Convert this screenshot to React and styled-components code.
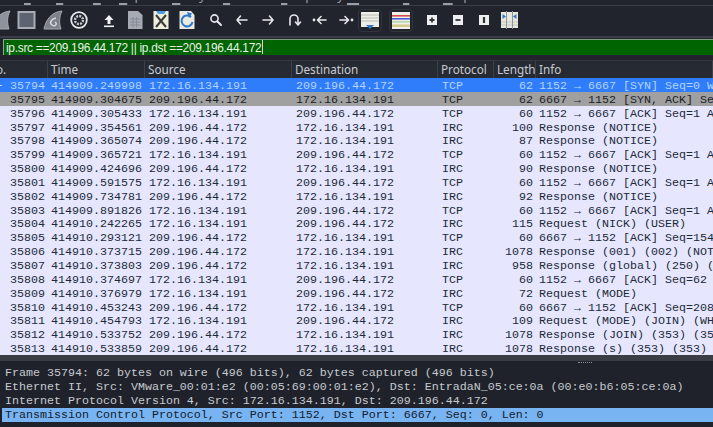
import React from 'react'
import styled, { createGlobalStyle } from 'styled-components'

const GlobalStyle = createGlobalStyle`
  html, body { margin: 0; padding: 0; background: #21242c; overflow: hidden; }
`

const mono = `"Liberation Mono", monospace`
const sans = `"Noto Sans", "Liberation Sans", sans-serif`

const Window = styled.div`
  width: 713px;
  height: 427px;
  display: flex;
  flex-direction: column;
  overflow: hidden;
  background: #21242c;
`

const MenuStrip = styled.div`
  height: 5px;
  flex: none;
  padding-left: 24px;
  display: flex;
  overflow: hidden;
  border-bottom: 1px solid #3a3e46;
`

const MenuItem = styled.span`
  flex: none;
  width: ${p => p.w}px;
  height: 19px;
  margin-top: -13px;
  font: 13px/16px ${sans};
  color: #9a9ea6;
  u { text-underline-offset: 3px; text-decoration-thickness: 2px; }
`

const Toolbar = styled.div`
  height: 28px;
  padding-bottom: 2px;
  flex: none;
  display: flex;
  align-items: center;
  margin-left: -12px;
`

const ToolGroup = styled.div`
  display: flex;
  align-items: center;
  margin-left: ${p => p.gap || 0}px;
`

const ToolButton = styled.div`
  width: ${p => (p.boxed ? 24 : 26)}px;
  height: ${p => (p.boxed ? 23 : 26)}px;
  flex: none;
  display: flex;
  align-items: center;
  justify-content: center;
  box-sizing: border-box;
  border: 1px solid ${p => (p.boxed ? '#30343d' : 'transparent')};
  border-radius: 4px;
`

const FilterBar = styled.div`
  flex: none;
  border-top: 2px solid #3a3e46;
  padding: 2px 0 5px 3px;
`

const FilterInput = styled.div`
  height: 15px;
  background: #006400;
  box-shadow: 0 -1px 0 #7f9f7f;
  border-left: 1px solid #8fae8f;
  padding-left: 2px;
  font: 11.9px/15px "Liberation Sans", sans-serif;
  letter-spacing: -0.28px;
  color: #e8f2e8;
  white-space: nowrap;
`

const Caret = styled.span`
  display: inline-block;
  width: 1px;
  height: 14px;
  margin-left: 1px;
  vertical-align: -2px;
  background: #e8c8e8;
`

const columns = '48px 97px 147px 146px 56px 42px 1fr'

const HeaderRow = styled.div`
  height: 18px;
  flex: none;
  display: grid;
  grid-template-columns: ${columns};
  background: #262a33;
  border-top: 1px solid #33373f;
  box-sizing: border-box;
`

const HeaderCell = styled.div`
  font: 11.7px/17px ${sans};
  color: #c6cad0;
  padding-left: 3px;
  border-right: 1px solid #3c4049;
  white-space: nowrap;
  overflow: hidden;
  text-indent: ${p => p.indent || 0}px;
`

const PacketList = styled.div`
  position: relative;
  height: 277px;
  flex: none;
  overflow: hidden;
  background: #e6e6ff;
`

const rowBg = { selected: '#2f7dfb', peer: '#a0a0a0', normal: '#e6e6ff' }
const rowFg = { selected: '#b5d4ff', peer: '#1c2228', normal: '#1c2a36' }

const Row = styled.div`
  height: 13.85px;
  display: grid;
  grid-template-columns: ${columns};
  grid-auto-rows: 13.85px;
  background: ${p => rowBg[p.kind]};
  color: ${p => rowFg[p.kind]};
  font: 11.67px/13.85px ${mono};
`

const Cell = styled.div`
  min-width: 0;
  padding: 2px 3px 0 ${p => p.pad || 3}px;
  white-space: nowrap;
  text-align: ${p => (p.end ? 'right' : 'left')};
`

const RelationMark = styled.span`
  position: absolute;
  left: 0;
  top: 7px;
  width: 2px;
  height: 1px;
  background: #b5d4ff;
`

const Splitter = styled.div`
  height: 6px;
  flex: none;
  background: #3a3d45;
`

const DetailPane = styled.div`
  flex: 1;
  background: #1f222a;
  padding: 5px 0 0 2px;
  position: relative;
`

const SplitterGrip = styled.span`
  position: absolute;
  left: 578px;
  top: 1px;
  width: 14px;
  border-top: 1px dotted #8b8f97;
`

const DetailRow = styled.div`
  height: 14px;
  padding-left: 3px;
  font: 11.67px/14px ${mono};
  white-space: nowrap;
  color: ${p => (p.active ? '#14202c' : '#c6cad0')};
  background: ${p => (p.active ? '#79b4f2' : 'transparent')};
`

const Ic = ({ w = 24, h = 26, children }) => (
  <svg width={w} height={h} viewBox={`0 0 ${w} ${h}`}>{children}</svg>
)

const line = { fill: 'none', stroke: '#e6e8ec', strokeWidth: 1.6, strokeLinecap: 'round', strokeLinejoin: 'round' }

const Fin = ({ swirl }) => (
  <Ic>
    <path d="M3 22 C5 12 11 5 21 4 C18 10 18 16 20 22 Z" fill={swirl ? '#7c818c' : '#8d929c'} stroke="#a5a9b2" strokeWidth="1" />
    {swirl && <path d="M15 11 C10 12 8 16 11 18 C14 20 17 17 14 15" fill="none" stroke="#d5d8de" strokeWidth="1.5" />}
  </Ic>
)

const Stop = () => (
  <Ic><rect x="3.5" y="5" width="16" height="16" fill="#5d6371" stroke="#a7acb6" strokeWidth="2" /></Ic>
)

const Gear = () => (
  <Ic>
    <circle cx="12" cy="13" r="7.8" fill="none" stroke="#e8e9ec" strokeWidth="1.8" />
    <circle cx="12" cy="13" r="4" fill="none" stroke="#c9ccd2" strokeWidth="2.4" strokeDasharray="2 1.1" />
  </Ic>
)

const Upload = () => (
  <Ic>
    <path d="M12 8 L7.5 13 H10.5 V17 H13.5 V13 H16.5 Z" fill="#f0f1f3" />
    <rect x="7" y="18.5" width="10" height="1.6" fill="#f0f1f3" />
  </Ic>
)

const GridFile = () => (
  <Ic>
    <path d="M5 4 H15 L19.5 8 V22 H5 Z" fill="#a6abb5" />
    <path d="M7 12 H17.5 M7 15 H17.5 M7 18 H17.5 M10 10 V20.5 M13.5 10 V20.5" stroke="#868b96" strokeWidth="1" />
  </Ic>
)

const CloseFile = () => (
  <Ic>
    <rect x="4.5" y="4" width="15" height="18" fill="#eeeedd" />
    <path d="M7 4 H17 L15 7 H9 Z" fill="#4d9ae6" />
    <path d="M7 8 L17 20 M17 8 L7 20" stroke="#3a3a3a" strokeWidth="2" />
  </Ic>
)

const ReloadFile = () => (
  <Ic>
    <path d="M4.5 4 H16 L19.5 8 V22 H4.5 Z" fill="#e8ebe4" />
    <path d="M16 10 A5.5 5.5 0 1 0 17.5 15" fill="none" stroke="#2f78c8" strokeWidth="2" />
    <path d="M12 5 L17 6.5 L14 11 Z" fill="#2f78c8" />
  </Ic>
)

const Search = () => (
  <Ic>
    <circle cx="10.5" cy="11.5" r="3.6" {...line} />
    <path d="M13.5 14.5 L17 18" {...line} strokeWidth="2" />
  </Ic>
)

const ArrowLeft = () => <Ic><path d="M17 13 H7 M10.5 9 L7 13 L10.5 17" {...line} /></Ic>
const ArrowRight = () => <Ic><path d="M7 13 H17 M13.5 9 L17 13 L13.5 17" {...line} /></Ic>

const Jump = () => (
  <Ic>
    <path d="M8 18 V12 A4 4 0 0 1 16 12 V17" {...line} />
    <path d="M13.5 15 L16 18 L18.5 15" {...line} />
  </Ic>
)

const Prev = () => (
  <Ic>
    <circle cx="6" cy="13" r="1.4" fill="#e6e8ec" />
    <path d="M18 13 H10 M13 9.5 L9.5 13 L13 16.5" {...line} />
  </Ic>
)

const Next = () => (
  <Ic>
    <circle cx="18" cy="13" r="1.4" fill="#e6e8ec" />
    <path d="M6 13 H14 M11 9.5 L14.5 13 L11 16.5" {...line} />
  </Ic>
)

const Autoscroll = () => (
  <Ic w={18} h={17}>
    <rect x="0" y="0" width="18" height="15" fill="#eeeee6" />
    <path d="M0 3 H18 M0 6 H18 M0 9 H18" stroke="#b8bcb8" strokeWidth="1" />
    <path d="M5 13 H13 L9 17 Z" fill="#2f78c8" />
  </Ic>
)

const Colorize = () => (
  <Ic w={18} h={17}>
    <rect x="0" y="0" width="18" height="17" fill="#f0f0ea" />
    <rect x="0" y="3" width="18" height="1.6" fill="#d84a4a" />
    <rect x="0" y="6" width="18" height="1.6" fill="#4a5ad8" />
    <rect x="0" y="9" width="18" height="1.6" fill="#b8d8a8" />
    <rect x="0" y="12.5" width="18" height="2.4" fill="#d8c888" />
  </Ic>
)

const Square = ({ children }) => (
  <Ic>
    <rect x="7" y="8" width="10" height="10" fill="#eeeeee" />
    {children}
  </Ic>
)

const ZoomIn = () => <Square><path d="M9.5 13 H14.5 M12 10.5 V15.5" stroke="#30333a" strokeWidth="1.8" /></Square>
const ZoomOut = () => <Square><path d="M9.5 13 H14.5" stroke="#30333a" strokeWidth="1.8" /></Square>
const ZoomNormal = () => <Square><path d="M12 10 V16" stroke="#30333a" strokeWidth="2.2" /></Square>

const Resize = () => (
  <Ic>
    <rect x="3" y="5" width="17" height="16" fill="#e8e8df" />
    <path d="M3 15 H20 M3 18 H20" stroke="#c4c6c0" strokeWidth="1" />
    <path d="M8.5 4 V22 M14.5 4 V22" stroke="#8f9296" strokeWidth="1" />
    <path d="M4.5 7 L8 9.5 L4.5 12 Z M18.5 7 L15 9.5 L18.5 12 Z" fill="#2f78c8" />
  </Ic>
)

const menu = [
  ['File', 32], ['Edit', 37], ['View', 26], ['Capture', 53], ['Analyze', 51],
  ['Statistics', 58], ['Telephony', 66], ['Wireless', 56], ['Tools', 40], ['Help', 40],
]

const A = '172.16.134.191'
const B = '209.196.44.172'

const ack = seq => `1152 → 6667 [ACK] Seq=${seq} Ack=1 Win=64240 Len=0`
const back = seq => `6667 → 1152 [ACK] Seq=${seq} Ack=62 Win=64240 Len=0`

const packets = [
  [35794, '414909.249998', A, B, 'TCP', 62, '1152 → 6667 [SYN] Seq=0 Win=64512 Len=0'],
  [35795, '414909.304675', B, A, 'TCP', 62, '6667 → 1152 [SYN, ACK] Seq=0 Ack=1 Win=64240'],
  [35796, '414909.305433', A, B, 'TCP', 60, ack(1)],
  [35797, '414909.354561', B, A, 'IRC', 100, 'Response (NOTICE)'],
  [35798, '414909.365074', B, A, 'IRC', 87, 'Response (NOTICE)'],
  [35799, '414909.365721', A, B, 'TCP', 60, ack(1)],
  [35800, '414909.424696', B, A, 'IRC', 90, 'Response (NOTICE)'],
  [35801, '414909.591575', A, B, 'TCP', 60, ack(1)],
  [35802, '414909.734781', B, A, 'IRC', 92, 'Response (NOTICE)'],
  [35803, '414909.891826', A, B, 'TCP', 60, ack(1)],
  [35804, '414910.242265', A, B, 'IRC', 115, 'Request (NICK) (USER)'],
  [35805, '414910.293121', B, A, 'TCP', 60, back(154)],
  [35806, '414910.373715', B, A, 'IRC', 1078, 'Response (001) (002) (NOTICE)'],
  [35807, '414910.373803', B, A, 'IRC', 958, 'Response (global) (250) (251)'],
  [35808, '414910.374697', A, B, 'TCP', 60, '1152 → 6667 [ACK] Seq=62 Ack=2090'],
  [35809, '414910.376979', A, B, 'IRC', 72, 'Request (MODE)'],
  [35810, '414910.453243', B, A, 'TCP', 60, back(208)],
  [35811, '414910.454793', A, B, 'IRC', 109, 'Request (MODE) (JOIN) (WHO)'],
  [35812, '414910.533752', B, A, 'IRC', 1078, 'Response (JOIN) (353) (353)'],
  [35813, '414910.533859', B, A, 'IRC', 1078, 'Response (s) (353) (353) (353)'],
]

const details = [
  'Frame 35794: 62 bytes on wire (496 bits), 62 bytes captured (496 bits)',
  'Ethernet II, Src: VMware_00:01:e2 (00:05:69:00:01:e2), Dst: EntradaN_05:ce:0a (00:e0:b6:05:ce:0a)',
  'Internet Protocol Version 4, Src: 172.16.134.191, Dst: 209.196.44.172',
  'Transmission Control Protocol, Src Port: 1152, Dst Port: 6667, Seq: 0, Len: 0',
]

const rowKind = i => (i === 0 ? 'selected' : i === 1 ? 'peer' : 'normal')

const App = () => (
  <Window>
    <GlobalStyle />
    <MenuStrip>
      {menu.map(([label, w]) => (
        <MenuItem key={label} w={w}><u>{label[0]}</u>{label.slice(1)}</MenuItem>
      ))}
    </MenuStrip>
    <Toolbar>
      <ToolGroup>
        <ToolButton><Fin /></ToolButton>
        <ToolButton><Stop /></ToolButton>
        <ToolButton><Fin swirl /></ToolButton>
        <ToolButton><Gear /></ToolButton>
      </ToolGroup>
      <ToolGroup gap={4}>
        <ToolButton><Upload /></ToolButton>
        <ToolButton><GridFile /></ToolButton>
        <ToolButton><CloseFile /></ToolButton>
        <ToolButton><ReloadFile /></ToolButton>
      </ToolGroup>
      <ToolGroup gap={3}>
        <ToolButton><Search /></ToolButton>
        <ToolButton><ArrowLeft /></ToolButton>
        <ToolButton><ArrowRight /></ToolButton>
        <ToolButton><Jump /></ToolButton>
        <ToolButton><Prev /></ToolButton>
        <ToolButton><Next /></ToolButton>
      </ToolGroup>
      <ToolGroup gap={-1}>
        <ToolButton boxed><Autoscroll /></ToolButton>
      </ToolGroup>
      <ToolGroup gap={7}>
        <ToolButton boxed><Colorize /></ToolButton>
      </ToolGroup>
      <ToolGroup gap={6}>
        <ToolButton><ZoomIn /></ToolButton>
        <ToolButton><ZoomOut /></ToolButton>
        <ToolButton><ZoomNormal /></ToolButton>
        <ToolButton><Resize /></ToolButton>
      </ToolGroup>
    </Toolbar>
    <FilterBar>
      <FilterInput>ip.src ==209.196.44.172 || ip.dst ==209.196.44.172<Caret /></FilterInput>
    </FilterBar>
    <HeaderRow>
      <HeaderCell indent={-16}>No.</HeaderCell>
      <HeaderCell>Time</HeaderCell>
      <HeaderCell>Source</HeaderCell>
      <HeaderCell>Destination</HeaderCell>
      <HeaderCell>Protocol</HeaderCell>
      <HeaderCell>Length</HeaderCell>
      <HeaderCell>Info</HeaderCell>
    </HeaderRow>
    <PacketList>
      <RelationMark />
      {packets.map((p, i) => (
        <Row key={p[0]} kind={rowKind(i)}>
          <Cell end>{p[0]}</Cell>
          <Cell>{p[1]}</Cell>
          <Cell pad={4}>{p[2]}</Cell>
          <Cell pad={4}>{p[3]}</Cell>
          <Cell pad={4}>{p[4]}</Cell>
          <Cell end>{p[5]}</Cell>
          <Cell>{p[6]}</Cell>
        </Row>
      ))}
    </PacketList>
    <Splitter />
    <DetailPane>
      <SplitterGrip />
      {details.map((d, i) => (
        <DetailRow key={d} active={i === 3}>{d}</DetailRow>
      ))}
    </DetailPane>
  </Window>
)

export default App
